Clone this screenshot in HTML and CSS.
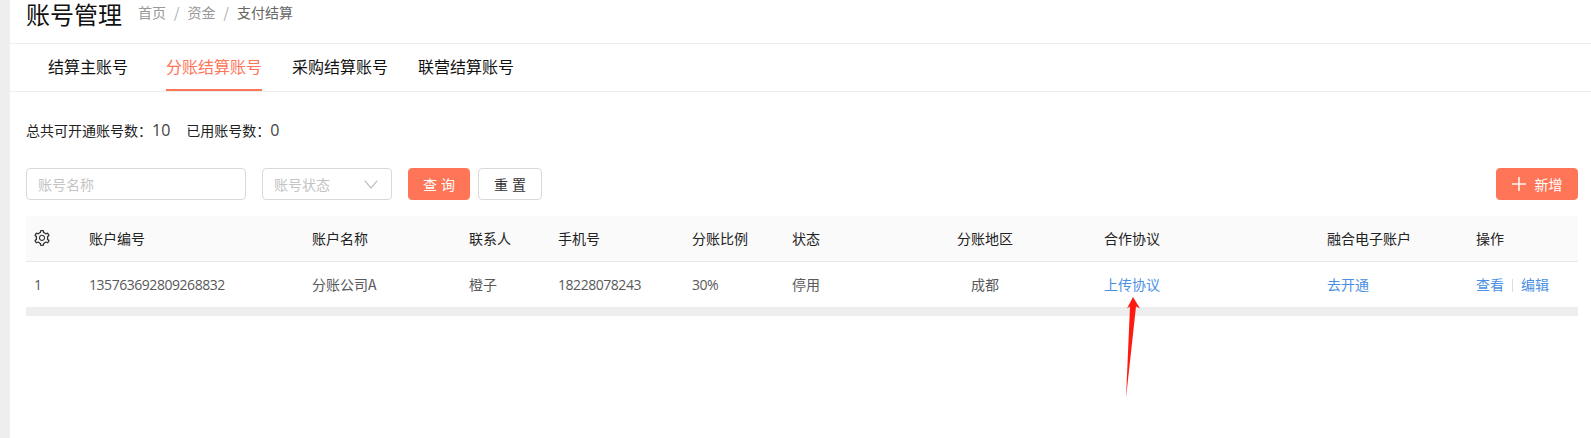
FILE: index.html
```html
<!DOCTYPE html>
<html lang="zh-CN">
<head>
<meta charset="utf-8">
<title>账号管理</title>
<link rel="stylesheet" href="styles.css">
</head>
<body>
<div class="layout">
  <aside class="rail"></aside>
  <main class="main">
    <header class="page-head">
      <h1 class="page-title">账号管理</h1>
      <nav class="crumbs">
        <span>首页</span><span class="sep">/</span><span>资金</span><span class="sep">/</span><span class="current">支付结算</span>
      </nav>
    </header>
    <nav class="tabs">
      <a class="tab lead">结算主账号</a>
      <a class="tab active">分账结算账号</a>
      <a class="tab">采购结算账号</a>
      <a class="tab">联营结算账号</a>
    </nav>
    <section class="content">
      <div class="stats">
        <span class="stat-label">总共可开通账号数：</span><span class="stat-num first">10</span>
        <span class="stat-label">已用账号数：</span><span class="stat-num">0</span>
      </div>
      <div class="filters">
        <div class="field field-name">账号名称</div>
        <div class="field field-status">账号状态
          <svg class="chev" viewBox="0 0 14 9" width="14" height="9"><path d="M.7.7 7 8l6.3-7.3" fill="none" stroke="#bfbfbf" stroke-width="1.2"/></svg>
        </div>
        <button class="btn primary">查 询</button>
        <button class="btn ghost">重 置</button>
        <button class="btn primary add">
          <svg viewBox="0 0 14 14" width="14" height="14"><path d="M7 0v14M0 7h14" stroke="#fff" stroke-width="1.6" fill="none" opacity=".9"/></svg>
          <span>新增</span>
        </button>
      </div>
      <table class="grid">
        <colgroup>
          <col class="c1"><col class="c2"><col class="c3"><col class="c4"><col class="c5"><col class="c6"><col class="c7"><col class="c8"><col class="c9"><col class="c10"><col class="c11">
        </colgroup>
        <thead>
          <tr>
            <th><svg class="gear" viewBox="64 64 896 896" width="16" height="16"><path fill="#333" d="M924.8 625.7l-65.5-56c3.1-19 4.7-38.4 4.7-57.8s-1.6-38.8-4.7-57.8l65.5-56a32.03 32.03 0 0 0 9.3-35.2l-.9-2.6a443.74 443.74 0 0 0-79.7-137.9l-1.8-2.1a32.12 32.12 0 0 0-35.1-9.5l-81.3 28.9c-30-24.6-63.5-44-99.7-57.6l-15.7-85a32.05 32.05 0 0 0-25.8-25.7l-2.7-.5c-52.1-9.4-106.9-9.4-159 0l-2.7.5a32.05 32.05 0 0 0-25.8 25.7l-15.8 85.4a351.86 351.86 0 0 0-99 57.4l-81.9-29.1a32 32 0 0 0-35.1 9.5l-1.8 2.1a446.02 446.02 0 0 0-79.7 137.9l-.9 2.6c-4.5 12.5-.8 26.5 9.3 35.2l66.3 56.6c-3.1 18.8-4.6 38-4.6 57.1 0 19.2 1.5 38.4 4.6 57.1L99 625.5a32.03 32.03 0 0 0-9.3 35.2l.9 2.6c18.1 50.4 44.9 96.9 79.7 137.9l1.8 2.1a32.12 32.12 0 0 0 35.1 9.5l81.9-29.1c29.8 24.5 63.1 43.9 99 57.4l15.8 85.4a32.05 32.05 0 0 0 25.8 25.7l2.7.5a449.4 449.4 0 0 0 159 0l2.7-.5a32.05 32.05 0 0 0 25.8-25.7l15.7-85a350 350 0 0 0 99.7-57.6l81.3 28.9a32 32 0 0 0 35.1-9.5l1.8-2.1c34.8-41.1 61.6-87.5 79.7-137.9l.9-2.6c4.5-12.3.8-26.3-9.3-35zM788.3 465.9c2.5 15.1 3.8 30.6 3.8 46.1s-1.3 31-3.8 46.1l-6.6 40.1 74.7 63.9a370.03 370.03 0 0 1-42.6 73.6L721 702.8l-31.4 25.8c-23.9 19.6-50.5 35-79.3 45.8l-38.1 14.3-17.9 97a377.5 377.5 0 0 1-85 0l-17.9-97.2-37.8-14.5c-28.5-10.8-55-26.2-78.7-45.7l-31.4-25.9-93.4 33.2c-17-22.9-31.2-47.6-42.6-73.6l75.5-64.5-6.5-40c-2.4-14.9-3.7-30.3-3.7-45.5 0-15.3 1.2-30.6 3.7-45.5l6.5-40-75.5-64.5c11.3-26.1 25.6-50.7 42.6-73.6l93.4 33.2 31.4-25.9c23.7-19.5 50.2-34.9 78.7-45.7l37.9-14.3 17.9-97.2c28.1-3.2 56.8-3.2 85 0l17.9 97 38.1 14.3c28.7 10.8 55.4 26.2 79.3 45.8l31.4 25.8 92.8-32.9c17 22.9 31.2 47.6 42.6 73.6L781.8 426l6.5 39.9zM512 326c-97.2 0-176 78.8-176 176s78.8 176 176 176 176-78.8 176-176-78.8-176-176-176zm79.2 255.200A111.6 111.6 0 0 1 512 614c-29.9 0-58-11.700-79.200-32.800A111.6 111.6 0 0 1 400 502c0-29.9 11.700-58 32.800-79.200C454 401.600 482.100 390 512 390c29.9 0 58 11.600 79.200 32.800A111.6 111.6 0 0 1 624 502c0 29.9-11.700 58-32.800 79.200z"/></svg></th>
            <th>账户编号</th><th>账户名称</th><th>联系人</th><th>手机号</th><th>分账比例</th><th>状态</th><th class="center">分账地区</th><th>合作协议</th><th>融合电子账户</th><th>操作</th>
          </tr>
        </thead>
        <tbody>
          <tr>
            <td><span class="num">1</span></td>
            <td><span class="num">135763692809268832</span></td>
            <td>分账公司A</td>
            <td>橙子</td>
            <td><span class="num">18228078243</span></td>
            <td><span class="num">30%</span></td>
            <td>停用</td>
            <td class="center">成都</td>
            <td><a class="link">上传协议</a></td>
            <td><a class="link">去开通</a></td>
            <td><a class="link">查看</a><i class="divider"></i><a class="link">编辑</a></td>
          </tr>
        </tbody>
      </table>
      <div class="scrollbar"></div>
    </section>
  </main>
</div>
<svg class="arrow" viewBox="0 0 20 101" width="20" height="101"><path d="M10 0 17 11.500 13 9.500 3 101 7 9.500 4 11.500z" fill="#ff1a10"/></svg>
</body>
</html>
```
FILE: styles.css
```css
* { box-sizing: border-box; }
html, body { margin: 0; height: 100%; background: #fff; overflow: hidden; }
body { font-family: "Noto Sans CJK SC", "Noto Sans", sans-serif; font-size: 14px; color: #333; position: relative; }
.layout { display: flex; height: 438px; }
.rail { width: 10px; background: #eeeeee; flex: none; }
.main { flex: 1; min-width: 0; }
.page-head { height: 44px; border-bottom: 1px solid #eeeeee; padding: 0 16px; display: flex; align-items: flex-start; gap: 16px; }
.page-title { margin: 0; font-size: 24px; font-weight: 400; line-height: 27px; color: #111; }
.crumbs { display: flex; gap: 8px; font-size: 14px; line-height: 25px; color: #999; }
.crumbs .sep { color: #aaa; }
.crumbs .current { color: #666; }
.tabs { height: 48px; border-bottom: 1px solid #eeeeee; display: flex; padding-left: 38px; gap: 30px; }
.tab { font-size: 16px; line-height: 44px; height: 47px; color: #111; border-bottom: 2px solid transparent; }
.tab.lead { margin-right: 8px; }
.tab.active { color: #ff7558; border-bottom-color: #ff7558; }
.content { padding: 0 13px 0 16px; }
.stats { height: 76px; padding-top: 25px; display: flex; align-items: baseline; line-height: 26px; color: #222; }
.stat-label { font-size: 14px; }
.stat-num { font-size: 16px; font-family: "Open Sans", sans-serif; color: #444; }
.stat-num.first { margin-right: 16px; }
.filters { display: flex; align-items: stretch; height: 32px; }
.field { border: 1px solid #d9d9d9; border-radius: 4px; color: #c4c4c4; line-height: 30px; padding: 0 11px; font-size: 14px; }
.field-name { width: 220px; margin-right: 16px; }
.field-status { width: 130px; margin-right: 16px; display: flex; justify-content: space-between; align-items: center; }
.chev { margin-right: 2px; }
.btn { font: inherit; border-radius: 4px; height: 32px; padding: 0; cursor: pointer; word-spacing: 1px; }
.btn.primary { background: #ff7558; border: 1px solid #ff7558; color: #fff; width: 62px; margin-right: 8px; }
.btn.ghost { background: #fff; border: 1px solid #d9d9d9; color: #333; width: 64px; }
.btn.add { width: 82px; margin: 0 0 0 auto; display: flex; align-items: center; justify-content: center; gap: 9px; }
.grid { width: 1552px; margin-top: 16px; border-collapse: collapse; table-layout: fixed; }
.c1 { width: 55px; } .c2 { width: 223px; } .c3 { width: 157px; } .c4 { width: 89px; }
.c5 { width: 134px; } .c6 { width: 100px; } .c7 { width: 90px; } .c8 { width: 222px; }
.c9 { width: 223px; } .c10 { width: 149px; } .c11 { width: 110px; }
th, td { padding: 0 8px; text-align: left; font-weight: 400; font-size: 14px; }
th { height: 45px; background: #fafafa; color: #222; border-bottom: 1px solid #e8e8e8; }
td { height: 46px; color: #595959; border-bottom: 1px solid #eee; }
.center { text-align: center; }
.num { font-family: "Open Sans", sans-serif; font-size: 14px; letter-spacing: -.46px; }
.gear { display: block; }
.link { color: #4a90e2; }
.divider { display: inline-block; width: 1px; height: 13px; background: #ddd; margin: 0 8px; vertical-align: -2px; }
.scrollbar { height: 8px; background: #eeeeee; }
.arrow { position: absolute; left: 1123px; top: 297px; }
```
